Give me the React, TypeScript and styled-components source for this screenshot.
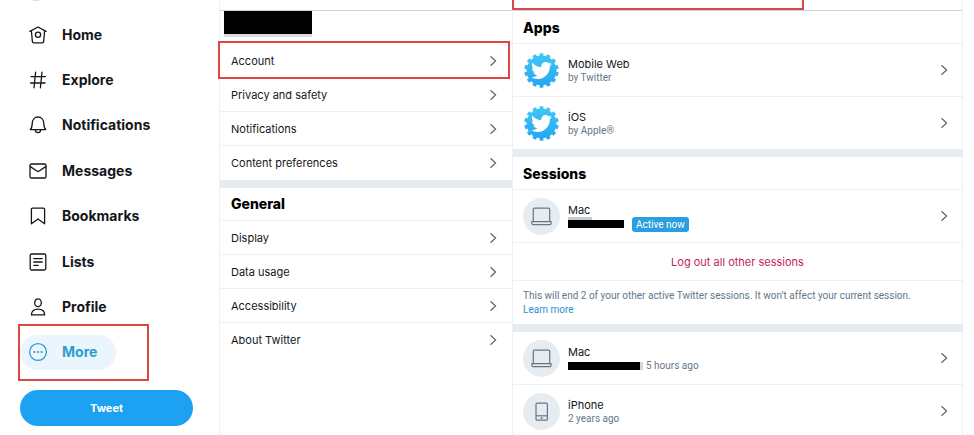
import React from "react";
import styled, { createGlobalStyle, css } from "styled-components";
import { FaTwitter } from "react-icons/fa";

const GlobalStyle = createGlobalStyle`
  *, *::before, *::after { box-sizing: border-box; }
  body {
    margin: 0;
    background: #fff;
    color: #14171a;
    font-family: Inter, "Liberation Sans", sans-serif;
    font-size: 11px;
    line-height: 14px;
  }
  a { color: inherit; text-decoration: none; }
  ul { list-style: none; margin: 0; padding: 0; }
`;

const colors = {
  blue: "#1da1f2",
  grey: "#657786",
  line: "#edf0f2",
  headerLine: "#ccd3d8",
  band: "#e6ecf0",
  red: "#dc4743",
  danger: "#c41e5c",
};

const Page = styled.div`
  display: grid;
  grid-template-columns: minmax(0, 219fr) minmax(0, 293fr) minmax(0, 451fr);
  height: 100vh;
  padding-right: 11px;
  overflow: hidden;
`;

const Sidebar = styled.header`
  display: flex;
  flex-direction: column;
  padding: 0 26px 0 20px;
`;

const LogoBar = styled.div`
  display: flex;
  align-items: flex-end;
  height: 12px;
  padding-left: 8px;
`;

const LogoEdge = styled.svg`
  display: block;
  width: 20px;
  height: 12px;
`;

const NavList = styled.ul`
  display: grid;
  grid-auto-rows: 1fr;
  min-height: 363px;
`;

const NavItem = styled.li`
  position: relative;
  display: flex;
  align-items: center;
`;

const NavLink = styled.a<{ $active?: boolean }>`
  display: inline-flex;
  align-items: center;
  gap: 14px;
  height: 35px;
  padding: 0 19px 0 8px;
  border-radius: 18px;
  font-size: 14px;
  font-weight: 700;
  line-height: 20px;
  ${(p) =>
    p.$active &&
    css`
      background: #eaf5fd;
      color: #2a9fd0;
    `}
`;

const NavIcon = styled.svg`
  width: 20px;
  height: 20px;
  fill: none;
  stroke: currentColor;
  stroke-width: 1.3;
  stroke-linecap: round;
  stroke-linejoin: round;
`;

const TweetButton = styled.button`
  height: 36px;
  margin-top: 15px;
  border: 0;
  border-radius: 18px;
  background: ${colors.blue};
  color: #fff;
  font: 700 11px/14px Inter, "Liberation Sans", sans-serif;
`;

const Highlight = styled.span<{ $inset: string }>`
  position: absolute;
  inset: ${(p) => p.$inset};
  border: 2px solid ${colors.red};
  pointer-events: none;
`;

const Column = styled.main`
  border-left: 1px solid ${colors.line};
`;

const DetailColumn = styled(Column).attrs({ as: "section" })`
  border-right: 1px solid ${colors.line};
`;

const ColumnHeader = styled.div`
  position: relative;
  height: 11px;
  border-bottom: 1px solid ${colors.headerLine};
`;

const Account = styled.div`
  height: 33px;
  padding-left: 4px;
`;

const Redaction = styled.span<{ $width: number; $height: number; $edge?: "bottom" | "top" | "right" }>`
  position: relative;
  display: block;
  width: ${(p) => p.$width}px;
  height: ${(p) => p.$height}px;
  background: #000;
  ${(p) => p.$edge === "bottom" && css`border-bottom: 3px solid #dcdfe1;`}
  ${(p) => p.$edge === "right" && css`border-right: 3px solid #d3d8dc;`}
  ${(p) =>
    p.$edge === "top" &&
    css`
      &::before {
        content: "";
        position: absolute;
        left: 0;
        bottom: 100%;
        width: 24px;
        height: 3px;
        background: #c9ccce;
      }
    `}
`;

const Heading = styled.h2`
  display: flex;
  align-items: center;
  height: 33px;
  margin: 0;
  padding: 0 11px;
  border-bottom: 1px solid ${colors.line};
  color: #000;
  font-size: 14px;
  font-weight: 800;
  line-height: 20px;
  ${DetailColumn} & { padding: 1px 10px 0; }
`;

const Band = styled.div`
  height: 8px;
  background: ${colors.band};
`;

const SettingItem = styled.li`
  position: relative;
  border-bottom: 1px solid ${colors.line};
  &:last-child { border-bottom-color: transparent; }
`;

const SettingLink = styled.a`
  display: flex;
  align-items: center;
  justify-content: space-between;
  height: 33px;
  padding: 0 15px 0 11px;
`;

const EntryItem = styled.li<{ $divided?: boolean }>`
  border-bottom: ${(p) => (p.$divided ? 1 : 0)}px solid ${colors.line};
`;

const EntryLink = styled.a`
  display: flex;
  align-items: center;
  gap: 8px;
  height: 52px;
  padding: 0 14px 0 10px;
`;

const EntryText = styled.div`
  flex: 1;
  min-width: 0;
  padding-top: 2px;
`;

const EntryMeta = styled.div`
  display: flex;
  align-items: center;
  height: 14px;
  gap: 3px;
  color: ${colors.grey};
  font-family: Roboto, "Liberation Sans", sans-serif;
  font-size: 10px;
`;

const Badge = styled.span`
  margin-left: 5px;
  padding: 0 4px;
  border-radius: 3px;
  background: #2a9fdf;
  color: #fff;
  line-height: 15px;
`;

const Avatar = styled.svg`
  flex: none;
  width: 37px;
  height: 37px;
`;

const ChevronIcon = styled.svg`
  flex: none;
  width: 8px;
  height: 12px;
  fill: none;
  stroke: #5b6670;
  stroke-width: 1.2;
`;

const LogOut = styled.button`
  display: block;
  width: 100%;
  height: 38px;
  border: 0;
  border-bottom: 1px solid ${colors.line};
  background: none;
  color: ${colors.danger};
  font: 400 11px/14px Inter, "Liberation Sans", sans-serif;
`;

const Note = styled.p`
  margin: 0;
  padding: 8px 10px 7px;
  color: ${colors.grey};
  font-family: Roboto, "Liberation Sans", sans-serif;
  font-size: 10px;
  a { display: block; color: #2a8fd0; }
`;

const Chevron = () => (
  <ChevronIcon viewBox="0 0 8 12" aria-hidden="true">
    <path d="M1.5 1.2 6.6 6 1.5 10.8" />
  </ChevronIcon>
);

const icons: Record<string, React.ReactNode> = {
  Home: (
    <>
      <path d="M1.9 6.4 10 2l8.1 4.4M3.4 6l1 10.7c.1.8.5 1.2 1.2 1.2h8.8c.7 0 1.1-.4 1.2-1.2l1-10.7" />
      <circle cx="10" cy="9.7" r="2.6" />
    </>
  ),
  Explore: <path d="M7.6 2.2 6 17.8M14 2.2l-1.6 15.6M3 6.6h14.4M2.6 13h14.4" />,
  Notifications: (
    <>
      <path d="M2.3 14.6c1.6-1.4 1.8-3.6 1.9-6C4.3 4.7 6.6 2 10 2s5.7 2.7 5.8 6.6c.1 2.4.3 4.6 1.9 6z" />
      <path d="M7.3 14.8c.1 1.8 1.2 2.9 2.7 2.9s2.6-1.1 2.7-2.9" />
    </>
  ),
  Messages: (
    <>
      <rect x="2" y="3" width="16" height="14" rx="1.6" />
      <path d="m2.3 5.6 7 4.7c.5.3.9.3 1.4 0l7-4.7" />
    </>
  ),
  Bookmarks: <path d="M3.4 17.8V3.3c0-.7.4-1.1 1.1-1.1h11c.7 0 1.1.4 1.1 1.1v14.5L10 12.9z" />,
  Lists: (
    <>
      <rect x="2.2" y="2" width="15.6" height="16" rx="1.5" />
      <path d="M5.8 6.6h8.4M5.8 10h8.4M5.8 13.3h4.4" />
    </>
  ),
  Profile: (
    <>
      <ellipse cx="10" cy="5.8" rx="3.3" ry="3.9" />
      <path d="M3.4 17.9c0-3.4 2.3-5.7 6.6-5.7s6.6 2.3 6.6 5.7z" />
    </>
  ),
  More: (
    <>
      <circle cx="10" cy="10" r="8.4" />
      <g fill="currentColor" stroke="none">
        <circle cx="6.4" cy="10" r="1.1" />
        <circle cx="10" cy="10" r="1.1" />
        <circle cx="13.6" cy="10" r="1.1" />
      </g>
    </>
  ),
};

const GearBird = ({ id }: { id: string }) => (
  <Avatar viewBox="0 0 37 37" aria-hidden="true">
    <defs>
      <linearGradient id={id} gradientUnits="userSpaceOnUse" x1="0" y1="1" x2="0" y2="36">
        <stop offset="0" stopColor="#41c8f5" />
        <stop offset="1" stopColor="#22a4f2" />
      </linearGradient>
    </defs>
    <circle cx="18.5" cy="18.5" r="15" fill={`url(#${id})`} />
    <circle
      cx="18.5"
      cy="18.5"
      r="15.7"
      fill="none"
      stroke={`url(#${id})`}
      strokeWidth="3"
      pathLength={280}
      strokeDasharray="11 9"
      strokeDashoffset="15.5"
    />
    <FaTwitter x={8} y={8} size={21} color="#fff" />
  </Avatar>
);

const Laptop = () => (
  <Avatar viewBox="0 0 37 37" aria-hidden="true">
    <circle cx="18.5" cy="18.5" r="18.5" fill="#e6ecf0" />
    <g fill="none" stroke="#657786" strokeWidth="1.2" strokeLinejoin="round">
      <path d="M10.3 23.6V11.6c0-.9.4-1.4 1.3-1.4h13.8c.9 0 1.3.5 1.3 1.4v12" />
      <path d="M8.9 23.6h19.2v1.8c0 .8-.5 1.2-1.3 1.2H10.2c-.8 0-1.3-.4-1.3-1.2z" />
    </g>
  </Avatar>
);

const Phone = () => (
  <Avatar viewBox="0 0 37 37" aria-hidden="true">
    <circle cx="18.5" cy="18.5" r="18.5" fill="#e6ecf0" />
    <g fill="none" stroke="#657786" strokeWidth="1.2">
      <rect x="13" y="10.2" width="11.4" height="17" rx="1.3" />
      <path d="M13 22.8h11.4" />
    </g>
    <circle cx="18.7" cy="25" r="1" fill="#657786" />
  </Avatar>
);

const navNames = ["Home", "Explore", "Notifications", "Messages", "Bookmarks", "Lists", "Profile", "More"];
const accountSettings = ["Account", "Privacy and safety", "Notifications", "Content preferences"];
const generalSettings = ["Display", "Data usage", "Accessibility", "About Twitter"];

const SettingList = ({ names, marked }: { names: string[]; marked?: string }) => (
  <ul>
    {names.map((name) => (
      <SettingItem key={name}>
        <SettingLink href="#">
          {name}
          <Chevron />
        </SettingLink>
        {name === marked && <Highlight $inset="-3px 2px -2px -2px" />}
      </SettingItem>
    ))}
  </ul>
);

type EntryProps = { icon: React.ReactNode; title: string; divided?: boolean; children: React.ReactNode };

const Entry = ({ icon, title, divided, children }: EntryProps) => (
  <EntryItem $divided={divided}>
    <EntryLink href="#">
      {icon}
      <EntryText>
        <div>{title}</div>
        <EntryMeta>{children}</EntryMeta>
      </EntryText>
      <Chevron />
    </EntryLink>
  </EntryItem>
);

export default function App() {
  return (
    <>
      <GlobalStyle />
      <Page>
        <Sidebar>
          <LogoBar>
            <LogoEdge viewBox="0 0 20 12" aria-hidden="true">
              <ellipse cx="8" cy="-2" rx="7" ry="3" fill="#b5eaf6" />
            </LogoEdge>
          </LogoBar>
          <nav>
            <NavList>
              {navNames.map((name) => (
                <NavItem key={name}>
                  <NavLink href="#" $active={name === "More"}>
                    <NavIcon viewBox="0 0 20 20" aria-hidden="true">
                      {icons[name]}
                    </NavIcon>
                    {name}
                  </NavLink>
                  {name === "More" && <Highlight $inset="-6px 44px -6px -2px" />}
                </NavItem>
              ))}
            </NavList>
          </nav>
          <TweetButton type="button">Tweet</TweetButton>
        </Sidebar>

        <Column>
          <ColumnHeader />
          <Account>
            <Redaction $width={88} $height={26} $edge="bottom" />
          </Account>
          <SettingList names={accountSettings} marked="Account" />
          <Band />
          <Heading>General</Heading>
          <SettingList names={generalSettings} />
        </Column>

        <DetailColumn>
          <ColumnHeader>
            <Highlight $inset="-20px 158px 0 -1px" />
          </ColumnHeader>
          <Heading>Apps</Heading>
          <ul>
            <Entry icon={<GearBird id="gear-web" />} title="Mobile Web" divided>
              by Twitter
            </Entry>
            <Entry icon={<GearBird id="gear-ios" />} title="iOS">
              by Apple®
            </Entry>
          </ul>
          <Band />
          <Heading>Sessions</Heading>
          <ul>
            <Entry icon={<Laptop />} title="Mac" divided>
              <Redaction $width={56} $height={8} $edge="top" />
              <Badge>Active now</Badge>
            </Entry>
          </ul>
          <LogOut type="button">Log out all other sessions</LogOut>
          <Note>
            This will end 2 of your other active Twitter sessions. It won’t affect your current session.{" "}
            <a href="#">Learn more</a>
          </Note>
          <Band />
          <ul>
            <Entry icon={<Laptop />} title="Mac" divided>
              <Redaction $width={75} $height={8} $edge="right" />
              5 hours ago
            </Entry>
            <Entry icon={<Phone />} title="iPhone">
              2 years ago
            </Entry>
          </ul>
        </DetailColumn>
      </Page>
    </>
  );
}
